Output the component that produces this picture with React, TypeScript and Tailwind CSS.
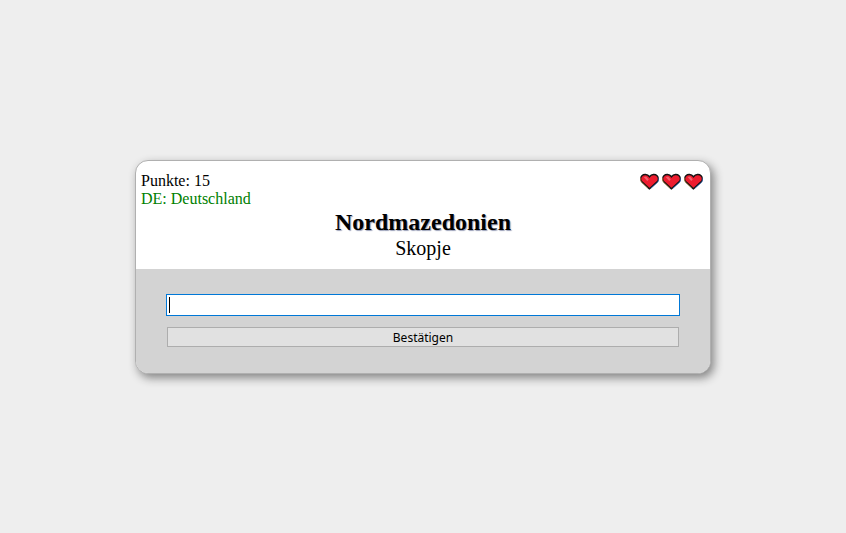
import React from "react";

function Heart() {
  return (
    <svg width="19" height="17" viewBox="0 0 20 18">
      <path d="M10 16.8 L2 9.4 C0.3 7.6 0.4 4.6 2 2.9 C4 1 7.6 1 10 4 C12.4 1 16 1 18 2.9 C19.6 4.6 19.7 7.6 18 9.4 Z" fill="#ed1c2e" stroke="#141414" strokeWidth="1.5" strokeLinejoin="miter" />
      <path d="M3.8 4.2 L6.6 3.6 L9.2 7 L7.6 8.4 Z" fill="#f2606c" />
      <path d="M11.6 16 L18.8 9.6 C19.7 8.4 20 6.8 19.8 5.2" fill="none" stroke="#2a66c8" strokeWidth="0.7" />
      <path d="M0.4 5.2 C0.1 7 0.6 8.6 1.4 9.6 L8.2 16" fill="none" stroke="#d9a040" strokeWidth="0.6" />
    </svg>
  );
}

export default function App() {
  return (
    <div className="flex h-[533px] w-[846px] items-start justify-center bg-[#eeeeee] pt-[160px] font-['Liberation_Serif',serif] text-black">
      <div className="w-[576px] overflow-hidden rounded-[13px] border border-[#b0b0b0] bg-white shadow-[3px_4px_10px_#858585]">
        <div className="h-[108px] pt-[11px]">
          <div className="flex items-start justify-between pl-[5px] pr-[7px]">
            <div className="text-[16px] leading-[18px]">
              <div>Punkte: 15</div>
              <div className="text-[#008000]">DE: Deutschland</div>
            </div>
            <div className="flex gap-[3px] pt-[1px]">
              <Heart />
              <Heart />
              <Heart />
            </div>
          </div>
          <div className="text-center text-[24px] leading-[28px] font-bold [text-shadow:1px_1px_1px_#9aa0b8]">Nordmazedonien</div>
          <div className="mt-[1px] text-center text-[20px] leading-[23px]">Skopje</div>
        </div>
        <div className="flex h-[104px] flex-col items-center bg-[#d3d3d3] pt-[25px]">
          <div className="relative h-[22px] w-[514px]">
            <input readOnly className="block h-full w-full border border-[#0078d7] bg-white outline-none" />
            <div className="absolute top-[3px] left-[3px] h-[16px] w-[1px] bg-black" />
          </div>
          <button className="mt-[11px] h-[20px] w-[512px] border border-[#adadad] bg-[#e1e1e1] pt-[1px] font-['Noto_Sans',sans-serif] text-[12px] leading-[18px] text-black">
            Bestätigen
          </button>
        </div>
      </div>
    </div>
  );
}
